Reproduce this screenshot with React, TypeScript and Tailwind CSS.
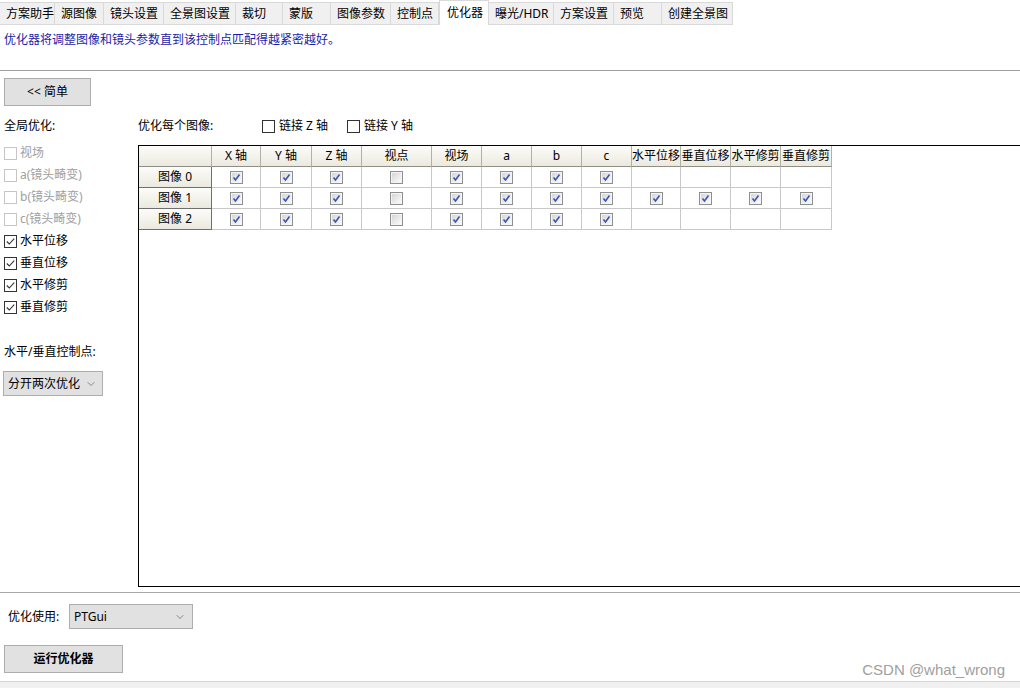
import React from "react";
import { ChevronDown } from "lucide-react";

const TABS: { label: string; w: string; active?: boolean }[] = [
  { label: "方案助手", w: "w-[55px]" },
  { label: "源图像", w: "w-[49px]" },
  { label: "镜头设置", w: "w-[60px]" },
  { label: "全景图设置", w: "w-[72px]" },
  { label: "裁切", w: "w-[47px]" },
  { label: "蒙版", w: "w-[48px]" },
  { label: "图像参数", w: "w-[60px]" },
  { label: "控制点", w: "w-[48px]" },
  { label: "优化器", w: "w-[50px]", active: true },
  { label: "曝光/HDR", w: "w-[65px]" },
  { label: "方案设置", w: "w-[60px]" },
  { label: "预览", w: "w-[48px]" },
  { label: "创建全景图", w: "w-[71px]" },
];

const GLOBAL_OPTS = [
  { label: "视场", checked: false, disabled: true },
  { label: "a(镜头畸变)", checked: false, disabled: true },
  { label: "b(镜头畸变)", checked: false, disabled: true },
  { label: "c(镜头畸变)", checked: false, disabled: true },
  { label: "水平位移", checked: true },
  { label: "垂直位移", checked: true },
  { label: "水平修剪", checked: true },
  { label: "垂直修剪", checked: true },
];

const COLS = ["X 轴", "Y 轴", "Z 轴", "视点", "视场", "a", "b", "c", "水平位移", "垂直位移", "水平修剪", "垂直修剪"];

// 1 = checked, 0 = unchecked, null = empty cell
const ROWS: (number | null)[][] = [
  [1, 1, 1, 0, 1, 1, 1, 1, null, null, null, null],
  [1, 1, 1, 0, 1, 1, 1, 1, 1, 1, 1, 1],
  [1, 1, 1, 0, 1, 1, 1, 1, null, null, null, null],
];

// old-style grid checkbox (blue tick on grey gradient)
const GridCheck = ({ checked }: { checked: boolean }) => (
  <svg width="13" height="13" viewBox="0 0 13 13">
    <defs>
      <linearGradient id="gc" x1="0" y1="0" x2="1" y2="1">
        <stop offset="0" stopColor="#d6d6d6" />
        <stop offset="1" stopColor="#fbfbfb" />
      </linearGradient>
    </defs>
    <rect x="0.5" y="0.5" width="12" height="12" fill="#f4f4f4" stroke="#8e8f8f" />
    <rect x="2" y="2" width="9" height="9" fill="url(#gc)" />
    {checked && (
      <path d="M3.5 6.5 L5.5 9 L9.5 3.5" fill="none" stroke="#3a55b0" strokeWidth="1.6" />
    )}
  </svg>
);

const WinCheck = ({ checked, disabled }: { checked: boolean; disabled?: boolean }) => (
  <svg width="13" height="13" viewBox="0 0 13 13" className="shrink-0">
    <rect x="0.5" y="0.5" width="12" height="12" fill="#fff" stroke={disabled ? "#c6c6c6" : "#333"} />
    {checked && <path d="M2.8 6.5 L5.3 9 L10.2 3.6" fill="none" stroke="#333" strokeWidth="1.1" />}
  </svg>
);

const cellHead =
  "h-[21px] flex items-center justify-center overflow-hidden whitespace-nowrap bg-gradient-to-b from-[#fcfcfa] to-[#ebe9df] border-r border-b border-r-[#b3b1a4] border-b-[#8f8f85]";

export default function App() {
  return (
    <div className="relative w-[1020px] h-[688px] overflow-hidden bg-white text-[12px] text-black font-['Noto_Sans','Noto_Sans_CJK_SC',sans-serif]">
      {/* tabs */}
      <div className="flex h-[25px] items-end">
        {TABS.map((t) =>
          t.active ? (
            <div
              key={t.label}
              className={`${t.w} h-[25px] shrink-0 bg-white border-l border-r border-t border-[#d9d9d9] pl-[7px] pt-[3px] leading-[18px]`}
            >
              {t.label}
            </div>
          ) : (
            <div
              key={t.label}
              className={`${t.w} h-[23px] shrink-0 bg-[#f0f0f0] border-t border-b border-r border-[#d9d9d9] pl-[6px] leading-[21px]`}
            >
              {t.label}
            </div>
          )
        )}
      </div>

      {/* description */}
      <div className="h-[45px] pl-[4px] pt-[7px] leading-[16px] text-[#1c1ca8]">
        优化器将调整图像和镜头参数直到该控制点匹配得越紧密越好。
      </div>

      {/* main */}
      <div className="h-[522px] border-t border-[#a0a0a0] pt-[7px]">
        <button className="ml-[4px] w-[87px] h-[28px] bg-[#e1e1e1] border border-[#adadad] flex items-center justify-center">
          &lt;&lt; 简单
        </button>

        <div className="flex mt-[4px]">
          {/* left column */}
          <div className="w-[138px] shrink-0 pl-[4px]">
            <div className="mt-[8px] h-[16px] leading-[16px]">全局优化:</div>
            <div className="mt-[8px] flex flex-col">
              {GLOBAL_OPTS.map((o) => (
                <div key={o.label} className="h-[22px] flex items-center gap-[3px]">
                  <WinCheck checked={o.checked} disabled={o.disabled} />
                  <span className={o.disabled ? "text-[#a0a0a0]" : ""}>{o.label}</span>
                </div>
              ))}
            </div>
            <div className="mt-[26px] h-[16px] leading-[16px]">水平/垂直控制点:</div>
            <div className="mt-[11px] -ml-[1px] w-[100px] h-[25px] bg-[#e1e1e1] border border-[#adadad] flex items-center justify-between pl-[4px] pr-[5px]">
              <span>分开两次优化</span>
              <ChevronDown size={12} strokeWidth={1.3} color="#555" />
            </div>
          </div>

          {/* right column */}
          <div className="flex-1 min-w-0">
            <div className="mt-[8px] h-[16px] flex items-center leading-[16px]">
              <span className="w-[124px]">优化每个图像:</span>
              <span className="flex items-center gap-[4px] w-[85px]">
                <WinCheck checked={false} />
                链接 Z 轴
              </span>
              <span className="flex items-center gap-[4px]">
                <WinCheck checked={false} />
                链接 Y 轴
              </span>
            </div>

            <div className="mt-[11px] w-[900px] h-[442px] border border-black">
              <div className="grid grid-cols-[73px_49px_51px_50px_70px_50px_50px_50px_50px_49px_50px_50px_51px]">
                <div className={cellHead} />
                {COLS.map((c) => (
                  <div key={c} className={cellHead}>
                    {c}
                  </div>
                ))}
                {ROWS.map((row, ri) => (
                  <React.Fragment key={ri}>
                    <div className="h-[21px] flex items-center justify-center bg-gradient-to-b from-[#fcfcfa] to-[#ebe9df] border-r border-b border-[#6f6f6f]">
                      图像 {ri}
                    </div>
                    {row.map((v, ci) => (
                      <div
                        key={ci}
                        className="h-[21px] flex items-center justify-center border-r border-b border-[#c8c8c8]"
                      >
                        {v !== null && <GridCheck checked={v === 1} />}
                      </div>
                    ))}
                  </React.Fragment>
                ))}
              </div>
            </div>
          </div>
        </div>
      </div>

      {/* bottom */}
      <div className="border-t border-[#a8a8a8] pl-[8px] pt-[11px]">
        <div className="flex items-center h-[25px]">
          <span className="w-[61px]">优化使用:</span>
          <div className="w-[124px] h-[25px] bg-[#e1e1e1] border border-[#adadad] flex items-center justify-between pl-[4px] pr-[6px]">
            <span>PTGui</span>
            <ChevronDown size={12} strokeWidth={1.3} color="#555" />
          </div>
        </div>
        <button className="mt-[16px] -ml-[4px] w-[119px] h-[28px] bg-[#e1e1e1] border border-[#adadad] font-bold flex items-center justify-center">
          运行优化器
        </button>
      </div>
      <div className="absolute left-0 right-0 top-[681px] h-[7px] border-t border-[#d4d4d4] bg-[#f0f0f0]" />

      <div className="absolute right-[15px] top-[659px] text-[15px] text-[#a0a0a0] font-['Liberation_Sans',sans-serif]">
        CSDN @what_wrong
      </div>
    </div>
  );
}
